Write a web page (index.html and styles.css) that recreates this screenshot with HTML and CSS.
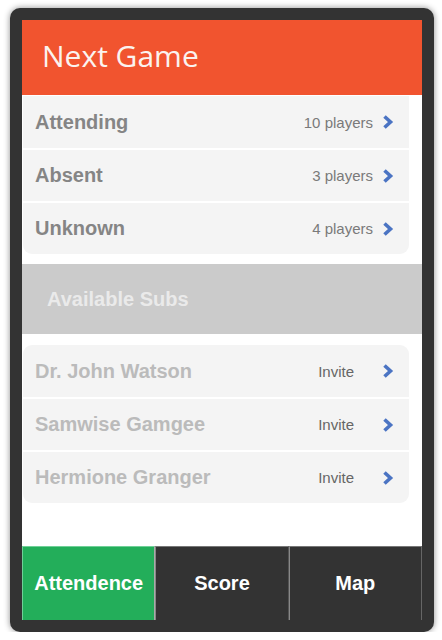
FILE: index.html
```html
<!DOCTYPE html>
<html lang="en">
<head>
    <meta charset="UTF-8">
    <meta name="viewport" content="width=device-width, initial-scale=1.0">
    <title>Next Game</title>
    <link rel="stylesheet" href="styles.css">
</head>
<body>
    <div class="phone">
        <div class="screen">
            <header class="header">
                <h1 class="title">Next Game</h1>
            </header>

            <div class="content">
                <!-- Attendance summary -->
                <ul class="list">
                    <li class="list-row">
                        <span class="row-label">Attending</span>
                        <span class="row-info">10 players</span>
                        <svg class="chevron" viewBox="0 0 12 16"><path d="M2.5 2.5 L8.5 8 L2.5 13.5"/></svg>
                    </li>
                    <li class="list-row">
                        <span class="row-label">Absent</span>
                        <span class="row-info">3 players</span>
                        <svg class="chevron" viewBox="0 0 12 16"><path d="M2.5 2.5 L8.5 8 L2.5 13.5"/></svg>
                    </li>
                    <li class="list-row">
                        <span class="row-label">Unknown</span>
                        <span class="row-info">4 players</span>
                        <svg class="chevron" viewBox="0 0 12 16"><path d="M2.5 2.5 L8.5 8 L2.5 13.5"/></svg>
                    </li>
                </ul>

                <div class="band">Available Subs</div>

                <!-- Subs -->
                <ul class="list">
                    <li class="list-row">
                        <span class="row-label faded">Dr. John Watson</span>
                        <span class="row-info invite">Invite</span>
                        <svg class="chevron" viewBox="0 0 12 16"><path d="M2.5 2.5 L8.5 8 L2.5 13.5"/></svg>
                    </li>
                    <li class="list-row">
                        <span class="row-label faded">Samwise Gamgee</span>
                        <span class="row-info invite">Invite</span>
                        <svg class="chevron" viewBox="0 0 12 16"><path d="M2.5 2.5 L8.5 8 L2.5 13.5"/></svg>
                    </li>
                    <li class="list-row">
                        <span class="row-label faded">Hermione Granger</span>
                        <span class="row-info invite">Invite</span>
                        <svg class="chevron" viewBox="0 0 12 16"><path d="M2.5 2.5 L8.5 8 L2.5 13.5"/></svg>
                    </li>
                </ul>
            </div>

            <nav class="tabs">
                <a class="tab active">Attendence</a>
                <a class="tab">Score</a>
                <a class="tab">Map</a>
            </nav>
        </div>
    </div>
</body>
</html>
```

FILE: styles.css
```css
body {
    margin: 0;
    background: #fff;
    font-family: "Liberation Sans", Arial, sans-serif;
}
.phone {
    width: 400px;
    height: 600px;
    margin: 8px 0 0 10px;
    padding: 12px;
    background: #333;
    border-radius: 10px;
    box-shadow: 0 0 6px rgba(0, 0, 0, .45);
}
.screen {
    width: 400px;
    height: 600px;
    background: #fff;
    display: flex;
    flex-direction: column;
}
.header {
    height: 75px;
    box-sizing: border-box;
    background: #f1542f;
    display: flex;
    align-items: center;
    padding: 0 0 5px 20px;
}
.title {
    margin: 0;
    font-family: "Open Sans", "Noto Sans", sans-serif;
    font-weight: 400;
    font-size: 30px;
    color: #fbf3ef;
}
.content { flex: 1; }
.list {
    list-style: none;
    margin: 1px 13px 0 1px;
    padding: 0;
    background: #f4f4f4;
    border-radius: 0 0 9px 9px;
}
.list + .band { margin-top: 10px; }
.band + .list { margin-top: 11px; border-radius: 9px; }
.list-row {
    display: flex;
    align-items: center;
    height: 51px;
    padding: 0 15px 0 12px;
    border-top: 2px solid #fff;
}
.list-row:first-child { border-top: 0; height: 52px; }
.row-label {
    flex: 1;
    font-size: 20px;
    font-weight: 700;
    color: #858585;
}
.row-label.faded { color: #bbb; }
.row-info {
    font-size: 15px;
    color: #7a7a7a;
    margin-right: 9px;
}
.row-info.invite { color: #666; margin-right: 28px; }
.chevron {
    width: 12px;
    height: 16px;
    fill: none;
    stroke: #4b74c3;
    stroke-width: 3.6;
}
.band {
    height: 70px;
    background: #cbcbcb;
    display: flex;
    align-items: center;
    padding-left: 25px;
    font-size: 20px;
    font-weight: 700;
    color: #eaeaea;
}
.tabs {
    height: 74px;
    display: flex;
}
.tab {
    flex: 1;
    display: flex;
    align-items: center;
    justify-content: center;
    background: #333;
    color: #fff;
    font-size: 20px;
    font-weight: 700;
    border-top: 1px solid #777;
    border-left: 1px solid #888;
    border-right: 1px solid #555;
}
.tab.active {
    background: #23ae5a;
    border-top-color: #6fd097;
    border-left-color: #6fd097;
    border-right-color: #aaa;
}
.tab:last-child { border-right-color: #666; }
```
